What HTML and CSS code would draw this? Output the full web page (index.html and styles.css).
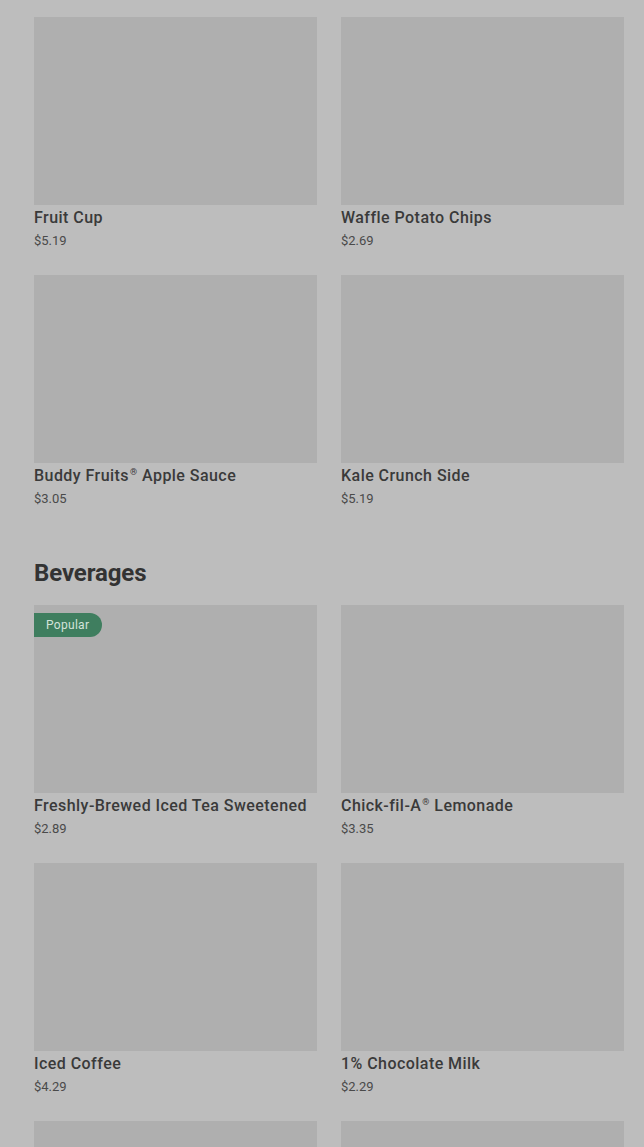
FILE: index.html
```html
<!DOCTYPE html>
<html lang="en">
<head>
    <meta charset="UTF-8">
    <meta name="viewport" content="width=device-width, initial-scale=1.0">
    <title>Menu</title>
    <link rel="stylesheet" href="styles.css">
</head>
<body>
    <div id="menu">
        <section class="menu-section">
            <div class="item-grid">
                <div class="item">
                    <div class="item-image"></div>
                    <div class="item-name">Fruit Cup</div>
                    <div class="item-price">$5.19</div>
                </div>
                <div class="item">
                    <div class="item-image"></div>
                    <div class="item-name">Waffle Potato Chips</div>
                    <div class="item-price">$2.69</div>
                </div>
                <div class="item">
                    <div class="item-image"></div>
                    <div class="item-name">Buddy Fruits<sup class="reg">®</sup> Apple Sauce</div>
                    <div class="item-price">$3.05</div>
                </div>
                <div class="item">
                    <div class="item-image"></div>
                    <div class="item-name">Kale Crunch Side</div>
                    <div class="item-price">$5.19</div>
                </div>
            </div>
        </section>

        <section class="menu-section">
            <h2 class="section-title">Beverages</h2>
            <div class="item-grid">
                <div class="item">
                    <div class="item-image">
                        <span class="badge">Popular</span>
                    </div>
                    <div class="item-name">Freshly-Brewed Iced Tea Sweetened</div>
                    <div class="item-price">$2.89</div>
                </div>
                <div class="item">
                    <div class="item-image"></div>
                    <div class="item-name">Chick-fil-A<sup class="reg">®</sup> Lemonade</div>
                    <div class="item-price">$3.35</div>
                </div>
                <div class="item">
                    <div class="item-image"></div>
                    <div class="item-name">Iced Coffee</div>
                    <div class="item-price">$4.29</div>
                </div>
                <div class="item">
                    <div class="item-image"></div>
                    <div class="item-name">1% Chocolate Milk</div>
                    <div class="item-price">$2.29</div>
                </div>
                <div class="item">
                    <div class="item-image"></div>
                </div>
                <div class="item">
                    <div class="item-image"></div>
                </div>
            </div>
        </section>
    </div>
</body>
</html>
```

FILE: styles.css
```css
body {
    margin: 0;
    padding: 0;
    background: #bdbdbd;
    font-family: Roboto, "Liberation Sans", Arial, sans-serif;
    color: #363636;
}

#menu {
    padding: 17px 20px 0 34px;
    display: flex;
    flex-direction: column;
    gap: 48px;
}

.section-title {
    margin: 0 0 16px 0;
    font-size: 24px;
    line-height: 32px;
    font-weight: 700;
    letter-spacing: -0.1px;
    color: #333;
}

.item-grid {
    display: grid;
    grid-template-columns: 1fr 1fr;
    column-gap: 24px;
    row-gap: 24px;
}

.item-image {
    position: relative;
    height: 188px;
    background: #afafaf;
}

.item-name {
    margin-top: 1px;
    font-size: 16px;
    line-height: 24px;
    font-weight: 500;
    letter-spacing: 0.45px;
    color: #3a3a3a;
    white-space: nowrap;
}

.item-name .reg {
    font-size: 9px;
    line-height: 0;
    vertical-align: 6px;
    margin-left: 1px;
}

.item-price {
    margin-top: 1px;
    font-size: 13px;
    line-height: 20px;
    color: #4a4a4a;
}

.badge {
    position: absolute;
    top: 8px;
    left: 0;
    height: 24px;
    line-height: 24px;
    padding: 0 13px 0 12px;
    background: #3f7e5f;
    color: #d3e3da;
    font-size: 12px;
    letter-spacing: 0.3px;
    border-radius: 0 12px 12px 0;
}
```
